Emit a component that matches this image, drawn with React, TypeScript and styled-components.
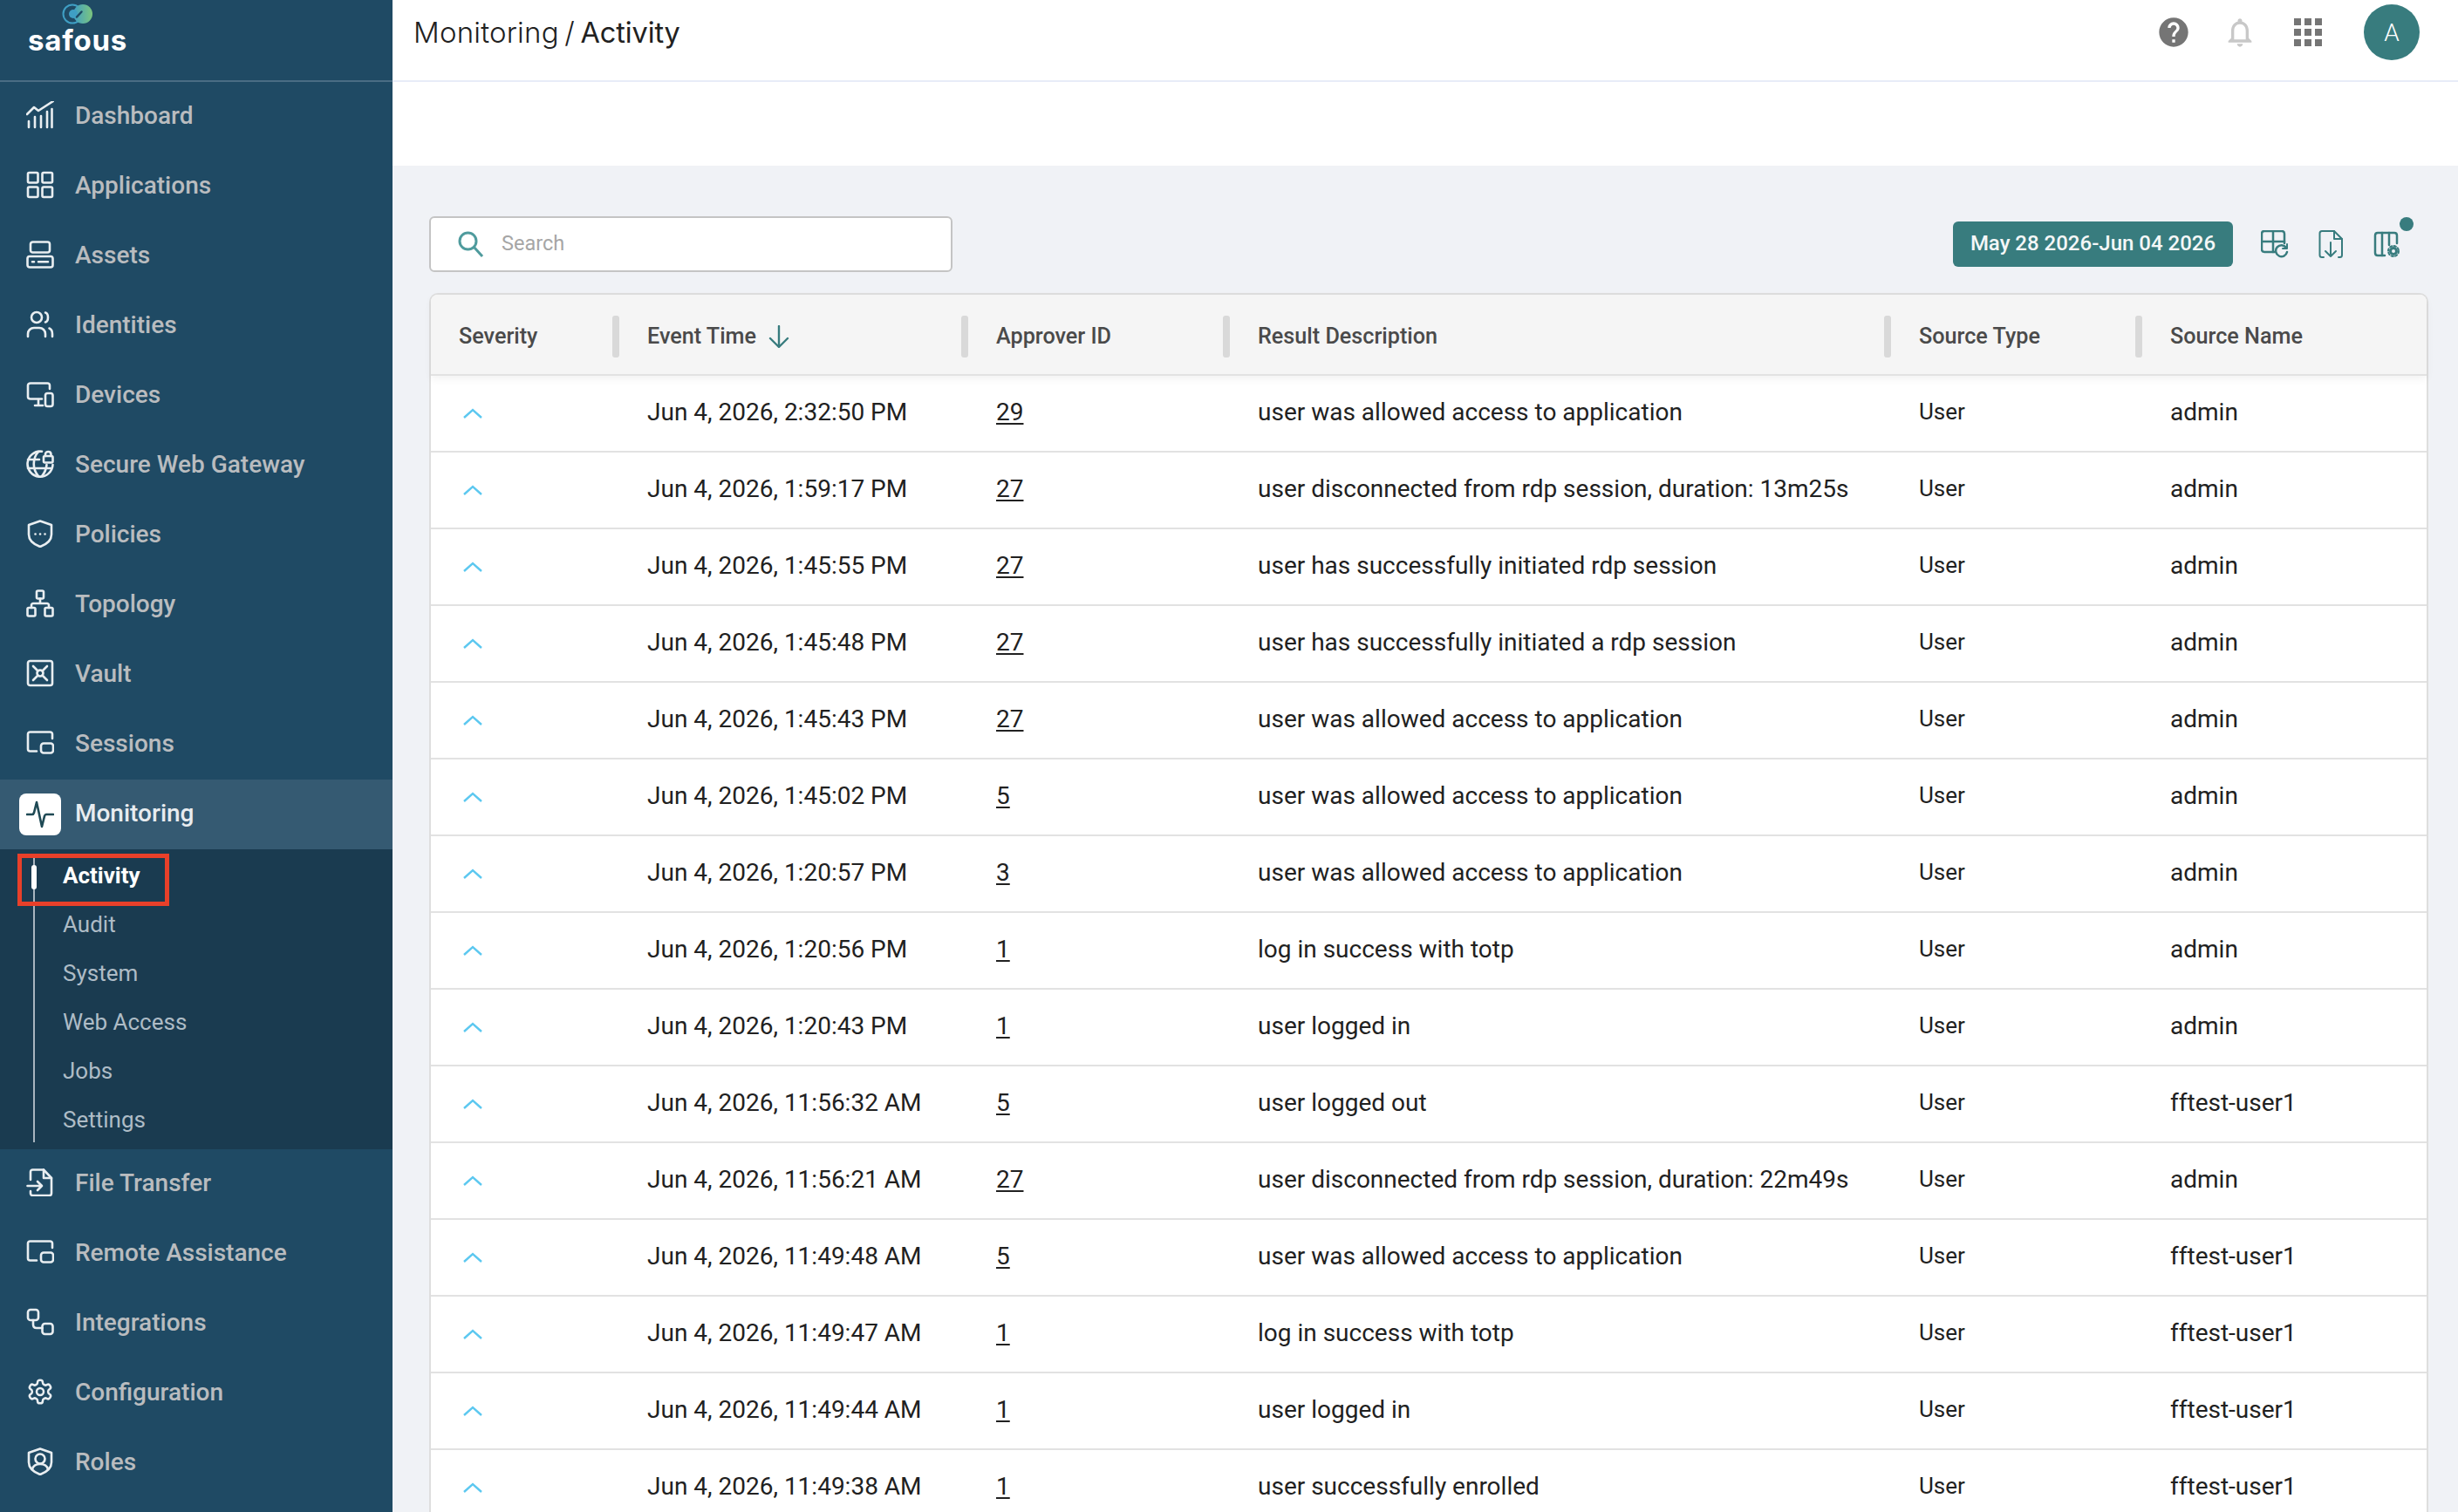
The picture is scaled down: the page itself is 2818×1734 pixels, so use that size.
import React from 'react';
import styled, { createGlobalStyle } from 'styled-components';

const GlobalStyle = createGlobalStyle`
  html, body {
    margin: 0;
    padding: 0;
    height: 100%;
    overflow: hidden;
    font-family: Roboto, "Liberation Sans", sans-serif;
  }
  #root { height: 100%; }
`;

const Page = styled.div`
  display: flex;
  height: 1734px;
  overflow: hidden;
`;

const Sidebar = styled.aside`
  position: relative;
  flex: 0 0 450px;
  background: #1f4a64;
  overflow: hidden;
`;

const Brand = styled.div`
  height: 94px;
  box-sizing: border-box;
  border-bottom: 2px solid #4a6d84;
  display: flex;
  flex-direction: column;
  align-items: flex-start;
  padding: 4px 0 0 32px;
`;

const BrandMark = styled.svg`
  display: block;
  width: 36px;
  height: 24px;
  margin-left: 39px;
`;

const BrandName = styled.span`
  font-family: Inter, sans-serif;
  font-weight: 700;
  font-size: 33px;
  line-height: 36px;
  letter-spacing: 0.8px;
  color: #fff;
`;

const NavRow = styled.div<{ $active?: boolean }>`
  display: flex;
  align-items: center;
  height: ${(p) => (p.$active ? 80 : 76)}px;
  margin-bottom: ${(p) => (p.$active ? 0 : 4)}px;
  padding-left: ${(p) => (p.$active ? 22 : 30)}px;
  background: ${(p) => (p.$active ? '#355a72' : 'transparent')};
`;

const NavIcon = styled.svg<{ $dark?: boolean }>`
  flex: none;
  width: 32px;
  height: 32px;
  fill: none;
  stroke: ${(p) => (p.$dark ? '#1f4a55' : '#e9eef1')};
  stroke-width: 2.6;
  stroke-linecap: round;
  stroke-linejoin: round;
`;

const IconTile = styled.span`
  flex: none;
  width: 48px;
  height: 48px;
  border-radius: 8px;
  background: #fff;
  display: flex;
  align-items: center;
  justify-content: center;
`;

const NavLabel = styled.span<{ $active?: boolean }>`
  margin-left: ${(p) => (p.$active ? 16 : 24)}px;
  margin-bottom: ${(p) => (p.$active ? 3 : 0)}px;
  font-size: 28px;
  font-weight: 500;
  color: ${(p) => (p.$active ? '#e8ecef' : '#b9bcbf')};
`;

const SubMenu = styled.div`
  background: #1a3b50;
  height: 344px;
  box-sizing: border-box;
  padding: 2px 0 0 72px;
`;

const SubTrack = styled.span`
  position: absolute;
  left: 38px;
  top: 984px;
  width: 2px;
  height: 326px;
  background: #a8b5bf;
`;

const SubMarker = styled.span`
  position: absolute;
  left: 36px;
  top: 992px;
  width: 6px;
  height: 28px;
  border-radius: 3px;
  background: #fff;
`;

const Annotation = styled.span`
  position: absolute;
  left: 20px;
  top: 979px;
  width: 174px;
  height: 60px;
  box-sizing: border-box;
  border: 5px solid #e8402a;
`;

const SubItem = styled.div<{ $active?: boolean }>`
  height: 56px;
  line-height: 56px;
  font-size: 26px;
  font-weight: ${(p) => (p.$active ? 700 : 400)};
  color: ${(p) => (p.$active ? '#fff' : '#aebcc6')};
`;

const Main = styled.main`
  flex: 1;
  min-width: 0;
  display: flex;
  flex-direction: column;
  background: #f0f2f6;
`;

const TopBar = styled.header`
  flex: none;
  height: 94px;
  box-sizing: border-box;
  border-bottom: 2px solid #e8ecf8;
  background: #fff;
  display: flex;
  align-items: center;
  padding: 0 44px 18px 24px;
`;

const Crumbs = styled.div`
  flex: 1;
  font-family: Inter, sans-serif;
  font-size: 33px;
  font-weight: 300;
  color: #212121;
  letter-spacing: 0.2px;
  word-spacing: -3px;
`;

const CrumbCurrent = styled.span`
  font-size: 32.5px;
  font-weight: 400;
  letter-spacing: -0.1px;
`;

const TopActions = styled.div`
  display: flex;
  align-items: center;
  gap: 34px;
`;

const TopIcon = styled.svg<{ $size: number; $color: string; $trail?: number }>`
  display: block;
  width: ${(p) => p.$size}px;
  height: ${(p) => p.$size}px;
  margin-right: ${(p) => p.$trail ?? 0}px;
  fill: ${(p) => p.$color};
`;

const Avatar = styled.div`
  width: 64px;
  height: 64px;
  margin-left: 6px;
  border-radius: 50%;
  background: #387c7e;
  color: #fff;
  font-size: 28px;
  font-weight: 300;
  display: flex;
  align-items: center;
  justify-content: center;
`;

const WhiteBand = styled.div`
  flex: none;
  height: 96px;
  background: #fff;
`;

const Content = styled.section`
  flex: 1;
  min-height: 0;
  padding: 58px 34px 0 42px;
`;

const Toolbar = styled.div`
  display: flex;
  align-items: center;
  height: 64px;
  margin-bottom: 24px;
  padding-right: 32px;
`;

const SearchBox = styled.label`
  width: 600px;
  height: 64px;
  box-sizing: border-box;
  border: 2px solid #c4c4c4;
  border-radius: 6px;
  background: #fff;
  display: flex;
  align-items: center;
  padding-left: 30px;
`;

const SearchInput = styled.input`
  flex: 1;
  min-width: 0;
  margin-left: 19px;
  padding: 0 0 2px;
  border: 0;
  outline: 0;
  background: transparent;
  font: 400 23.5px Roboto, sans-serif;
  color: #212121;
  &::placeholder {
    color: #a6a6a6;
    opacity: 1;
  }
`;

const DateButton = styled.button`
  margin-left: auto;
  width: 321px;
  height: 52px;
  border: 0;
  border-radius: 6px;
  background: #387c7e;
  color: #f4f7f7;
  font: 500 24px Roboto, sans-serif;
  padding: 0 0 2px;
`;

const ToolIcons = styled.div`
  display: flex;
  gap: 32px;
  margin-left: 32px;
`;

const ToolIcon = styled.span`
  position: relative;
  display: block;
  width: 32px;
  height: 32px;
`;

const ToolSvg = styled.svg`
  display: block;
  width: 32px;
  height: 32px;
  fill: none;
  stroke: #387c7e;
  stroke-width: 2;
  stroke-linecap: round;
  stroke-linejoin: round;
`;

const Badge = styled.span`
  position: absolute;
  left: 31px;
  top: -15px;
  width: 16px;
  height: 16px;
  border-radius: 50%;
  background: #387c7e;
`;

const Table = styled.div`
  border: 2px solid #dedede;
  border-bottom: 0;
  border-radius: 10px 10px 0 0;
  background: #fff;
`;

const COLUMNS = '216px 400px 300px 758px 288px 1fr';

const HeadRow = styled.div`
  position: relative;
  display: grid;
  grid-template-columns: ${COLUMNS};
  align-items: center;
  height: 93px;
  box-sizing: border-box;
  padding-top: 5px;
  border-bottom: 2px solid #e2e2e2;
  border-radius: 8px 8px 0 0;
  background: #f5f5f5;
  box-shadow: 0 4px 10px rgba(0, 0, 0, 0.05);
`;

const HeadCell = styled.div`
  display: flex;
  align-items: center;
  height: 48px;
  padding-left: 32px;
  font-size: 25.2px;
  font-weight: 500;
  color: #4a4a4a;
`;

const HeadLabel = styled.span`
  margin-bottom: 2px;
`;

const SortArrow = styled.svg`
  width: 24px;
  height: 26px;
  margin-left: 14px;
  fill: none;
  stroke: #387c7e;
  stroke-width: 2.4;
  stroke-linecap: round;
  stroke-linejoin: round;
`;

const Separator = styled.span`
  width: 8px;
  height: 48px;
  margin-left: auto;
  border-radius: 3px;
  background: #d9d9d9;
`;

const BodyRow = styled.div`
  display: grid;
  grid-template-columns: ${COLUMNS};
  align-items: center;
  height: 88px;
  box-sizing: border-box;
  padding-bottom: 4px;
  border-bottom: 2px solid #e2e2e2;
  font-size: 28px;
  color: #212121;
`;

const BodyCell = styled.div`
  padding-left: 32px;
  white-space: nowrap;
`;

const SmallCell = styled(BodyCell)`
  font-size: 26px;
`;

const Chevron = styled.svg`
  display: block;
  width: 22px;
  height: 12px;
  margin: 4px 0 0 5px;
  fill: none;
  stroke: #5cc8f0;
  stroke-width: 2.4;
`;

const IdLink = styled.a`
  color: #212121;
  text-decoration: underline;
  text-underline-offset: 3px;
`;

const navIcons: Record<string, React.ReactNode> = {
  Dashboard: (
    <>
      <path d="M1 15 9 7l5 4L31 0" />
      <path d="M3 23v7M10 18v12M17 17v13M24 12v18M29.500 9v21" />
    </>
  ),
  Applications: (
    <>
      <rect x="2" y="2" width="11.500" height="11.500" rx="1.500" />
      <rect x="18.500" y="2" width="11.500" height="11.500" rx="1.500" />
      <rect x="2" y="18.500" width="11.500" height="11.500" rx="1.500" />
      <rect x="18.500" y="18.500" width="11.500" height="11.500" rx="1.500" />
    </>
  ),
  Assets: (
    <>
      <rect x="5" y="1.500" width="22" height="12" rx="2.500" />
      <rect x="1.500" y="18" width="29" height="12.500" rx="2.500" />
      <path d="M7 24.200h2M14 24.200h11" />
    </>
  ),
  Identities: (
    <>
      <circle cx="12" cy="8" r="6" />
      <path d="M22 2.500c4 1 4 10 0 11" />
      <path d="M2 30v-3c0-4 3-7 7-7h6c4 0 7 3 7 7v3" />
      <path d="M26.500 20.500c2.500 1 3.500 4 3.500 6.500v3" />
    </>
  ),
  Devices: (
    <>
      <path d="M27 10V6c0-1.500-1-2.500-2.500-2.500H5C3 3.500 2 4.500 2 6v13c0 1.500 1 2.500 3 2.500h13" />
      <path d="M10 29h9M14 22v6" />
      <rect x="22" y="15" width="8.500" height="15" rx="2.500" />
    </>
  ),
  'Secure Web Gateway': (
    <>
      <path d="M18 1.800A14.500 14.500 0 1 0 30.500 17" />
      <path d="M2 11h13M2 21h27M14 2c-7 8-7 20 0 28M18 30c3.500-4 5-8 5.500-13" />
      <rect x="20" y="7" width="10.500" height="7.500" rx="1.500" />
      <path d="M22 7V5c0-4 6.500-4 6.500 0v2" />
    </>
  ),
  Policies: (
    <>
      <path d="M16 1.500 29 6v11c0 6-5 11-13 14C8 28 3 23 3 17V6z" />
      <path d="M10.500 16.500h.1M16 16.500h.1M21.500 16.500h.1" />
    </>
  ),
  Topology: (
    <>
      <rect x="12" y="1.500" width="8" height="9" rx="1.500" />
      <rect x="1.500" y="21" width="9" height="9.500" rx="1.500" />
      <rect x="21.500" y="21" width="9" height="9.500" rx="1.500" />
      <path d="M16 10.500V16M6 21v-3c0-1 1-2 2-2h16c1 0 2 1 2 2v3" />
    </>
  ),
  Vault: (
    <>
      <rect x="2" y="2" width="28" height="28" rx="2.500" />
      <circle cx="16" cy="16" r="3.500" />
      <path d="M8 8l5.500 5.500M24 8l-5.500 5.500M8 24l5.500-5.500M24 24l-5.500-5.500" />
    </>
  ),
  Sessions: (
    <>
      <path d="M30 11V6c0-1.500-1-2.500-2.500-2.500h-23C3 3.500 2 4.500 2 6v17c0 1.500 1 2.500 2.500 2.500H12" />
      <rect x="17" y="16.500" width="14" height="11" rx="3" />
    </>
  ),
  'File Transfer': (
    <>
      <path d="M5 13V4c0-1.500 1-2.500 2.500-2.500H20L29 11v17.500c0 1.500-1 2.500-2.500 2.500h-19C6 31 5 30 5 28.500V26" />
      <path d="M20 1.500V11h9M1.500 20H18M13 15l5 5-5 5" />
    </>
  ),
  'Remote Assistance': (
    <>
      <path d="M30 11V6c0-1.500-1-2.500-2.500-2.500h-23C3 3.500 2 4.500 2 6v17c0 1.500 1 2.500 2.500 2.500H12" />
      <rect x="17" y="16.500" width="14" height="11" rx="3" />
    </>
  ),
  Integrations: (
    <>
      <rect x="2" y="2" width="12" height="12" rx="3" />
      <rect x="18.500" y="18" width="12" height="12" rx="3" />
      <path d="M8 14v5c0 2 1 4 4 4h6.500" />
    </>
  ),
  Configuration: (
    <g transform="scale(1.333)" strokeWidth="1.900">
      <path d="M12.220 2h-.44a2 2 0 0 0-2 2v.18a2 2 0 0 1-1 1.730l-.43.25a2 2 0 0 1-2 0l-.15-.08a2 2 0 0 0-2.730.73l-.22.38a2 2 0 0 0 .73 2.730l.15.1a2 2 0 0 1 1 1.720v.51a2 2 0 0 1-1 1.740l-.15.09a2 2 0 0 0-.73 2.730l.22.38a2 2 0 0 0 2.730.73l.15-.08a2 2 0 0 1 2 0l.43.25a2 2 0 0 1 1 1.730V20a2 2 0 0 0 2 2h.44a2 2 0 0 0 2-2v-.18a2 2 0 0 1 1-1.730l.43-.25a2 2 0 0 1 2 0l.15.08a2 2 0 0 0 2.730-.73l.22-.39a2 2 0 0 0-.73-2.730l-.15-.08a2 2 0 0 1-1-1.740v-.5a2 2 0 0 1 1-1.740l.15-.09a2 2 0 0 0 .73-2.730l-.22-.38a2 2 0 0 0-2.730-.73l-.15.08a2 2 0 0 1-2 0l-.43-.25a2 2 0 0 1-1-1.730V4a2 2 0 0 0-2-2z" />
      <circle cx="12" cy="12" r="3" />
    </g>
  ),
  Roles: (
    <>
      <path d="M16 1.500 29 6v11c0 6-5 11-13 14C8 28 3 23 3 17V6z" />
      <circle cx="16" cy="13" r="5.500" />
      <path d="M7 25c1-4 4-6 9-6s8 2 9 6" />
    </>
  ),
};

const topNav = [
  'Dashboard',
  'Applications',
  'Assets',
  'Identities',
  'Devices',
  'Secure Web Gateway',
  'Policies',
  'Topology',
  'Vault',
  'Sessions',
];
const bottomNav = ['File Transfer', 'Remote Assistance', 'Integrations', 'Configuration', 'Roles'];
const subNav = ['Activity', 'Audit', 'System', 'Web Access', 'Jobs', 'Settings'];

const headers = ['Severity', 'Event Time', 'Approver ID', 'Result Description', 'Source Type', 'Source Name'];

const rows = [
  ['Jun 4, 2026, 2:32:50 PM', '29', 'user was allowed access to application', 'admin'],
  ['Jun 4, 2026, 1:59:17 PM', '27', 'user disconnected from rdp session, duration: 13m25s', 'admin'],
  ['Jun 4, 2026, 1:45:55 PM', '27', 'user has successfully initiated rdp session', 'admin'],
  ['Jun 4, 2026, 1:45:48 PM', '27', 'user has successfully initiated a rdp session', 'admin'],
  ['Jun 4, 2026, 1:45:43 PM', '27', 'user was allowed access to application', 'admin'],
  ['Jun 4, 2026, 1:45:02 PM', '5', 'user was allowed access to application', 'admin'],
  ['Jun 4, 2026, 1:20:57 PM', '3', 'user was allowed access to application', 'admin'],
  ['Jun 4, 2026, 1:20:56 PM', '1', 'log in success with totp', 'admin'],
  ['Jun 4, 2026, 1:20:43 PM', '1', 'user logged in', 'admin'],
  ['Jun 4, 2026, 11:56:32 AM', '5', 'user logged out', 'fftest-user1'],
  ['Jun 4, 2026, 11:56:21 AM', '27', 'user disconnected from rdp session, duration: 22m49s', 'admin'],
  ['Jun 4, 2026, 11:49:48 AM', '5', 'user was allowed access to application', 'fftest-user1'],
  ['Jun 4, 2026, 11:49:47 AM', '1', 'log in success with totp', 'fftest-user1'],
  ['Jun 4, 2026, 11:49:44 AM', '1', 'user logged in', 'fftest-user1'],
  ['Jun 4, 2026, 11:49:38 AM', '1', 'user successfully enrolled', 'fftest-user1'],
];

function NavItem({ name }: { name: string }) {
  return (
    <NavRow>
      <NavIcon viewBox="0 0 32 32">{navIcons[name]}</NavIcon>
      <NavLabel>{name}</NavLabel>
    </NavRow>
  );
}

export default function App() {
  return (
    <>
      <GlobalStyle />
      <Page>
        <Sidebar>
          <Brand>
            <BrandMark viewBox="0 0 36 24">
              <defs>
                <linearGradient id="brandGrad" x1="0" y1="0" x2="1" y2="0">
                  <stop offset="0" stopColor="#3f9fc4" />
                  <stop offset="1" stopColor="#7cc57e" />
                </linearGradient>
              </defs>
              <circle cx="12" cy="12" r="10.500" fill="none" stroke="#3f9fc4" strokeWidth="2" />
              <circle cx="24" cy="12" r="11" fill="url(#brandGrad)" />
              <circle cx="13" cy="12" r="5" fill="#3f9fc4" />
              <path d="M17 15.500l5.500-6" stroke="#1f4a64" strokeWidth="2.500" strokeLinecap="round" />
            </BrandMark>
            <BrandName>safous</BrandName>
          </Brand>
          {topNav.map((name) => (
            <NavItem key={name} name={name} />
          ))}
          <NavRow $active>
            <IconTile>
              <NavIcon viewBox="0 0 32 32" $dark>
                <path d="M1 16h6c1 0 1.500-.5 2-2l3-12 6 28 3-12c.5-1.500 1-2 2-2h8" />
              </NavIcon>
            </IconTile>
            <NavLabel $active>Monitoring</NavLabel>
          </NavRow>
          <SubMenu>
            {subNav.map((name, i) => (
              <SubItem key={name} $active={i === 0}>
                {name}
              </SubItem>
            ))}
          </SubMenu>
          <SubTrack />
          <SubMarker />
          <Annotation />
          {bottomNav.map((name) => (
            <NavItem key={name} name={name} />
          ))}
        </Sidebar>

        <Main>
          <TopBar>
            <Crumbs>
              Monitoring / <CrumbCurrent>Activity</CrumbCurrent>
            </Crumbs>
            <TopActions>
              <TopIcon viewBox="0 0 24 24" $size={40} $color="#757575" $trail={2}>
                <path d="M12 2C6.480 2 2 6.480 2 12s4.480 10 10 10 10-4.480 10-10S17.520 2 12 2zm1 17h-2v-2h2v2zm2.070-7.750l-.9.920C13.450 12.900 13 13.500 13 15h-2v-.5c0-1.100.45-2.100 1.170-2.830l1.240-1.260c.37-.36.59-.86.59-1.410 0-1.100-.9-2-2-2s-2 .9-2 2H8c0-2.210 1.790-4 4-4s4 1.790 4 4c0 .88-.36 1.680-.93 2.250z" />
              </TopIcon>
              <TopIcon viewBox="0 0 24 24" $size={40} $color="#c8c8c8">
                <path d="M12 22c1.100 0 2-.9 2-2h-4c0 1.100.9 2 2 2zm6-6v-5c0-3.070-1.630-5.640-4.500-6.320V4c0-.83-.67-1.500-1.500-1.500s-1.500.67-1.500 1.500v.68C7.640 5.360 6 7.920 6 11v5l-2 2v1h16v-1l-2-2zm-2 1H8v-6c0-2.480 1.510-4.500 4-4.500s4 2.020 4 4.500v6z" />
              </TopIcon>
              <TopIcon viewBox="0 0 24 24" $size={48} $color="#757575">
                <path d="M4 8h4V4H4v4zm6 12h4v-4h-4v4zm-6 0h4v-4H4v4zm0-6h4v-4H4v4zm6 0h4v-4h-4v4zm6-10v4h4V4h-4zm-6 4h4V4h-4v4zm6 6h4v-4h-4v4zm0 6h4v-4h-4v4z" />
              </TopIcon>
              <Avatar>A</Avatar>
            </TopActions>
          </TopBar>
          <WhiteBand />
          <Content>
            <Toolbar>
              <SearchBox>
                <svg width="32" height="32" viewBox="0 0 32 32" fill="none" stroke="#4f9b9d" strokeWidth="3">
                  <circle cx="12.500" cy="12.500" r="9.500" />
                  <path d="M19.500 19.500 29 30" />
                </svg>
                <SearchInput placeholder="Search" />
              </SearchBox>
              <DateButton>May 28 2026-Jun 04 2026</DateButton>
              <ToolIcons>
                <ToolIcon>
                  <ToolSvg viewBox="0 0 32 32">
                    <path d="M16 25H4c-2 0-3-1-3-3V4c0-2 1-3 3-3h20c2 0 3 1 3 3v11" strokeWidth="2.500" />
                    <path d="M14 1v24M1 13h26" strokeWidth="2.500" />
                    <path d="M29 20a6.500 6.500 0 1 0 1 5" strokeWidth="2.500" />
                    <path d="M30 16v5h-5" strokeWidth="2" />
                  </ToolSvg>
                </ToolIcon>
                <ToolIcon>
                  <ToolSvg viewBox="0 0 32 32">
                    <path d="M8 31H6c-1.500 0-2.500-1-2.500-2.500v-25C3.500 2 4.500 1 6 1h14l9 9v18.500c0 1.500-1 2.500-2.500 2.500H25" />
                    <path d="M20 1v9h9" />
                    <path d="M16 14v16M10 24l6 6 6-6" />
                  </ToolSvg>
                </ToolIcon>
                <ToolIcon>
                  <ToolSvg viewBox="0 0 32 32">
                    <path d="M14 29H6c-2 0-3-1-3-3V6c0-2 1-3 3-3h19c2 0 3 1 3 3v9" strokeWidth="2.500" />
                    <path d="M11 3v26M19 3v14" strokeWidth="2.500" />
                    <circle cx="24" cy="24" r="3.500" strokeWidth="3" />
                    <circle cx="24" cy="24" r="6" strokeWidth="2" strokeDasharray="2.400 2.300" />
                  </ToolSvg>
                  <Badge />
                </ToolIcon>
              </ToolIcons>
            </Toolbar>

            <Table>
              <HeadRow>
                {headers.map((h, i) => (
                  <HeadCell key={h}>
                    <HeadLabel>{h}</HeadLabel>
                    {h === 'Event Time' && (
                      <SortArrow viewBox="0 0 24 26">
                        <path d="M12 1v24M2 15l10 10 10-10" />
                      </SortArrow>
                    )}
                    {i < headers.length - 1 && <Separator />}
                  </HeadCell>
                ))}
              </HeadRow>
              {rows.map((r) => (
                <BodyRow key={r[0]}>
                  <BodyCell>
                    <Chevron viewBox="0 0 22 12">
                      <path d="M1 11 11 2l10 9" />
                    </Chevron>
                  </BodyCell>
                  <BodyCell>{r[0]}</BodyCell>
                  <BodyCell>
                    <IdLink href="#">{r[1]}</IdLink>
                  </BodyCell>
                  <BodyCell>{r[2]}</BodyCell>
                  <SmallCell>User</SmallCell>
                  <BodyCell>{r[3]}</BodyCell>
                </BodyRow>
              ))}
            </Table>
          </Content>
        </Main>
      </Page>
    </>
  );
}
